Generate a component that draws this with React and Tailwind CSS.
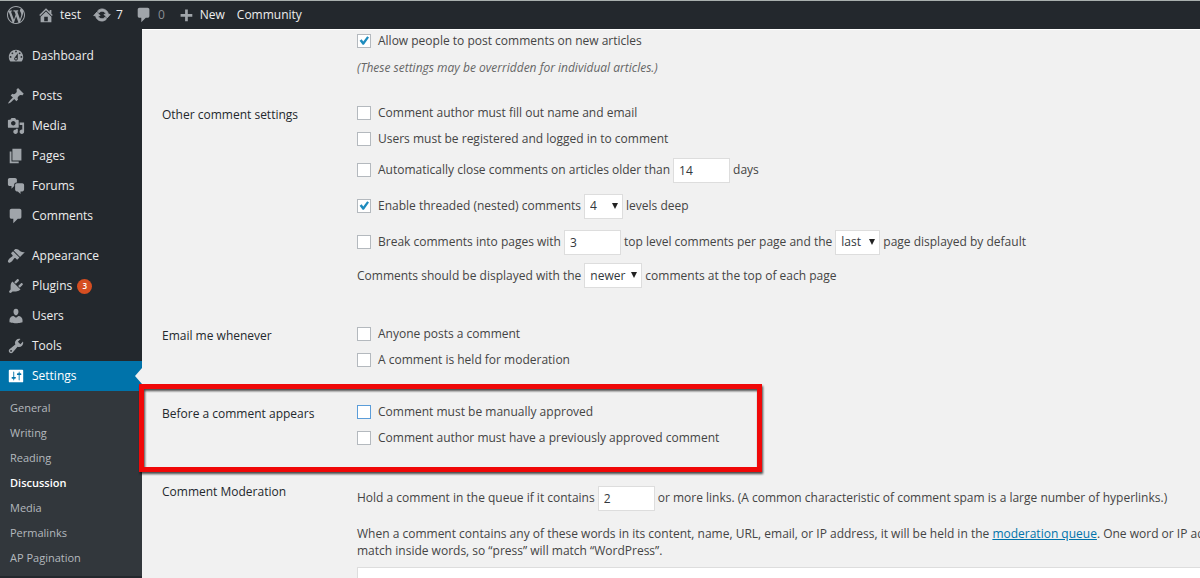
import clsx from 'clsx';

const paths = {
  wordpress: 'M20 10c0-5.51-4.49-10-10-10C4.48 0 0 4.49 0 10c0 5.52 4.48 10 10 10 5.51 0 10-4.48 10-10zM7.78 15.37L4.37 6.22c.55-.02 1.17-.08 1.17-.08.5-.06.44-1.13-.06-1.11 0 0-1.45.11-2.37.11-.18 0-.37 0-.58-.01C4.12 2.69 6.87 1.11 10 1.11c2.33 0 4.45.87 6.05 2.34-.68-.11-1.65.39-1.65 1.58 0 .74.45 1.36.9 2.1.35.61.55 1.36.55 2.46 0 1.49-1.4 5-1.4 5l-3.03-8.37c.54-.02.82-.17.82-.17.5-.05.44-1.25-.06-1.22 0 0-1.44.12-2.38.12-.87 0-2.33-.12-2.33-.12-.5-.03-.56 1.2-.06 1.22l.92.08 1.26 3.41zM17.41 10c.24-.64.74-1.87.43-4.25.7 1.29 1.05 2.71 1.05 4.25 0 3.29-1.73 6.24-4.4 7.78.97-2.59 1.94-5.2 2.92-7.78zM6.1 18.09C3.12 16.65 1.11 13.53 1.11 10c0-1.3.23-2.48.72-3.59C3.25 10.3 4.67 14.2 6.1 18.09zm4.03-6.63l2.58 6.98c-.86.29-1.76.45-2.71.45-.79 0-1.57-.11-2.29-.33.81-2.38 1.62-4.74 2.42-7.1z',
  home: 'M16 8.5l1.53 1.53-1.06 1.06L10 4.6l-6.47 6.49-1.06-1.06L10 2.5l4 4v-2h2v4zm-6-2.46l6 5.99V18H4v-5.97zM12 17v-5H8v5h4z',
  update: 'M10.2 3.28c3.53 0 6.43 2.61 6.92 6h2.08l-3.5 4-3.5-4h2.32c-.45-1.97-2.21-3.45-4.32-3.45-1.45 0-2.73.71-3.54 1.78L4.95 5.66C6.23 4.2 8.11 3.28 10.2 3.28zm-.4 13.44c-3.52 0-6.43-2.61-6.92-6H.8l3.5-4c1.17 1.33 2.33 2.67 3.5 4H5.48c.45 1.97 2.21 3.45 4.32 3.45 1.45 0 2.73-.71 3.54-1.78l1.71 1.95c-1.28 1.46-3.15 2.38-5.25 2.38z',
  comments: 'M5 2h9c1.1 0 2 .9 2 2v7c0 1.1-.9 2-2 2h-2l-5 5v-5H5c-1.1 0-2-.9-2-2V4c0-1.1.9-2 2-2z',
  plus: 'M17 9v3h-5v5H9v-5H4V9h5V4h3v5z',
  dashboard: 'M3.76 16h12.48c1.1-1.37 1.76-3.11 1.76-5 0-4.42-3.58-8-8-8s-8 3.58-8 8c0 1.89.66 3.63 1.76 5zM10 4c.55 0 1 .45 1 1s-.45 1-1 1-1-.45-1-1 .45-1 1-1zM6 6c.55 0 1 .45 1 1s-.45 1-1 1-1-.45-1-1 .45-1 1-1zm8 0c.55 0 1 .45 1 1s-.45 1-1 1-1-.45-1-1 .45-1 1-1zm-5.37 5.55L12 7v6c0 1.1-.9 2-2 2s-2-.9-2-2c0-.57.24-1.08.63-1.45zM4 10c.55 0 1 .45 1 1s-.45 1-1 1-1-.45-1-1 .45-1 1-1zm12 0c.55 0 1 .45 1 1s-.45 1-1 1-1-.45-1-1 .45-1 1-1zm-5 3c0-.55-.45-1-1-1s-1 .45-1 1 .45 1 1 1 1-.45 1-1z',
  post: 'M10.44 3.02l1.82-1.82 6.36 6.35-1.83 1.82c-1.05-.68-2.48-.57-3.41.36l-.75.75c-.92.93-1.04 2.35-.35 3.41l-1.83 1.82-2.41-2.41-2.8 2.79c-.42.42-3.38 2.71-3.8 2.29s1.86-3.39 2.28-3.81l2.79-2.79L4.1 9.36l1.83-1.82c1.05.69 2.48.57 3.4-.36l.75-.75c.93-.92 1.05-2.35.36-3.41z',
  media: 'M13 11V4c0-.55-.45-1-1-1h-1.67L9 1H5L3.67 3H2c-.55 0-1 .45-1 1v7c0 .55.45 1 1 1h10c.55 0 1-.45 1-1zM7 4.5c1.38 0 2.5 1.12 2.5 2.5S8.38 9.5 7 9.5 4.5 8.38 4.5 7 5.62 4.5 7 4.5zM14 6h5v10.5c0 1.38-1.12 2.5-2.5 2.5S14 17.88 14 16.5s1.12-2.5 2.5-2.5c.17 0 .34.02.5.05V9h-3V6zm-4 8.05V13h2v3.5c0 1.38-1.12 2.5-2.5 2.5S7 17.88 7 16.5 8.12 14 9.5 14c.17 0 .34.02.5.05z',
  page: 'M6 15V2h10v13H6zm-1 1h8v2H3V5h2v11z',
  forums: 'M11 6h-.82C9.07 6 8 7.2 8 8.16V10l-3 3v-3H3c-1.1 0-2-.9-2-2V3c0-1.1.9-2 2-2h6c1.1 0 2 .9 2 2v3zm0 1h6c1.1 0 2 .9 2 2v5c0 1.1-.9 2-2 2h-2v3l-3-3h-1c-1.1 0-2-.9-2-2V9c0-1.1.9-2 2-2z',
  appearance: 'M14.48 11.06L7.41 3.99l1.5-1.5c.5-.56 2.3-.47 3.51.32 1.21.8 1.43 1.28 2.91 2.1 1.18.64 2.45 1.26 4.45.85zm-.71.71L6.7 4.7 4.93 6.47c-.39.39-.39 1.02 0 1.41l1.06 1.06c.39.39.39 1.03 0 1.42-.6.6-1.43 1.11-2.21 1.69-.35.26-.7.53-1.01.84C1.43 14.23.4 16.08 1.4 17.07c.99 1 2.84-.03 4.18-1.36.31-.31.58-.66.85-1.02.57-.78 1.08-1.61 1.69-2.21.39-.39 1.02-.39 1.41 0l1.06 1.06c.39.39 1.02.39 1.41 0z',
  plugins: 'M13.11 4.36L9.87 7.6 8 5.73l3.24-3.24c.35-.34 1.05-.2 1.56.32.52.51.66 1.21.31 1.55zm-8 1.77l.91-1.12 9.01 9.01-1.19.84c-.71.71-2.63 1.16-3.82 1.16H6.14L4.9 17.26c-.59.59-1.54.59-2.12 0-.59-.58-.59-1.53 0-2.12l1.24-1.24v-3.88c0-1.13.4-3.19 1.09-3.89zm7.26 3.97l3.24-3.24c.34-.35 1.04-.21 1.55.31.52.51.66 1.21.31 1.55l-3.24 3.25z',
  users: 'M10 9.25c-2.27 0-2.73-3.44-2.73-3.44C7 4.02 7.82 2 9.97 2c2.16 0 2.98 2.02 2.71 3.81 0 0-.41 3.44-2.68 3.44zm0 2.57L12.72 10c2.39 0 4.52 2.33 4.52 4.53v2.49s-3.65 1.13-7.24 1.13c-3.65 0-7.24-1.13-7.24-1.13v-2.49c0-2.25 1.94-4.48 4.47-4.48z',
  tools: 'M16.68 9.77c-1.34 1.34-3.3 1.67-4.95.99l-5.41 6.52c-.99.99-2.59.99-3.58 0s-.99-2.59 0-3.57l6.52-5.42c-.68-1.65-.35-3.61.99-4.95 1.28-1.28 3.12-1.62 4.72-1.06l-2.89 2.89 2.82 2.82 2.86-2.87c.53 1.58.18 3.39-1.08 4.65zM3.81 16.21c.4.39 1.04.39 1.43 0 .4-.4.4-1.04 0-1.43-.39-.4-1.03-.4-1.43 0-.39.39-.39 1.03 0 1.43z',
  settings: 'M18 16V4c0-.55-.45-1-1-1H3c-.55 0-1 .45-1 1v12c0 .55.45 1 1 1h14c.55 0 1-.45 1-1zM8 11h1c.55 0 1 .45 1 1s-.45 1-1 1H8v1.5c0 .28-.22.5-.5.5s-.5-.22-.5-.5V13H6c-.55 0-1-.45-1-1s.45-1 1-1h1V5.5c0-.28.22-.5.5-.5s.5.22.5.5V11zm5-2h-1c-.55 0-1-.45-1-1s.45-1 1-1h1V5.5c0-.28.22-.5.5-.5s.5.22.5.5V7h1c.55 0 1 .45 1 1s-.45 1-1 1h-1v5.5c0 .28-.22.5-.5.5s-.5-.22-.5-.5V9z',
};

const menuGroups = [
  [{ icon: 'dashboard', label: 'Dashboard' }],
  [
    { icon: 'post', label: 'Posts' },
    { icon: 'media', label: 'Media' },
    { icon: 'page', label: 'Pages' },
    { icon: 'forums', label: 'Forums' },
    { icon: 'comments', label: 'Comments' },
  ],
  [
    { icon: 'appearance', label: 'Appearance' },
    { icon: 'plugins', label: 'Plugins', count: 3 },
    { icon: 'users', label: 'Users' },
    { icon: 'tools', label: 'Tools' },
    { icon: 'settings', label: 'Settings', current: true },
  ],
];

const submenu = ['General', 'Writing', 'Reading', 'Discussion', 'Media', 'Permalinks', 'AP Pagination'];

function Icon({ name, className }) {
  return (
    <svg viewBox="0 0 20 20" className={clsx('h-[18px] w-[18px] shrink-0 fill-current', className)} aria-hidden="true">
      <path fillRule="evenodd" d={paths[name]} />
    </svg>
  );
}

function AdminBar() {
  return (
    <header className="flex h-[29px] items-center gap-3 border-t border-[#a9b0ae] bg-[#23282d] px-[7px] text-[#eee]">
      <a href="#" aria-label="About WordPress"><Icon name="wordpress" className="text-[#a0a5aa]" /></a>
      <a href="#" className="flex items-center gap-[5px]"><Icon name="home" className="text-[#a0a5aa]" />test</a>
      <a href="#" className="flex items-center gap-[5px]"><Icon name="update" className="stroke-current stroke-1 text-[#a0a5aa]" />7</a>
      <a href="#" className="flex items-center gap-[5px] text-[#8a8f94]"><Icon name="comments" className="text-[#a0a5aa]" />0</a>
      <a href="#" className="flex items-center gap-[5px]"><Icon name="plus" className="text-[#a0a5aa]" />New</a>
      <a href="#">Community</a>
    </header>
  );
}

function Sidebar() {
  return (
    <nav className="w-[142px] shrink-0 bg-[#23282d] pt-3 text-[#eee]">
      <div className="flex flex-col gap-2.5">
        {menuGroups.map((group, i) => (
          <ul key={i}>
            {group.map(item => (
              <li key={item.label}>
                <a
                  href="#"
                  className={clsx('relative flex h-[30px] items-center gap-[5px] pl-[7px]', item.current && 'bg-[#0073aa] text-white')}
                >
                  <Icon name={item.icon} className={item.current ? 'text-white' : 'text-[#a0a5aa]'} />
                  <span className="pl-0.5">{item.label}</span>
                  {item.count && (
                    <span className="flex h-[15px] w-[15px] items-center justify-center rounded-full bg-[#d54e21] text-[8px] font-semibold text-white">
                      {item.count}
                    </span>
                  )}
                  {item.current && (
                    <span className="absolute top-[7px] right-0 border-y-8 border-r-[7px] border-y-transparent border-r-[#f1f1f1]" />
                  )}
                </a>
              </li>
            ))}
          </ul>
        ))}
      </div>
      <ul className="bg-[#32373c] pt-1 pb-1.5 pl-2.5 text-[#b4b9be]">
        {submenu.map(label => (
          <li key={label} className="h-[25px] text-[11px] leading-[25px]">
            <a href="#" className={clsx(label === 'Discussion' && 'font-semibold text-white')}>{label}</a>
          </li>
        ))}
      </ul>
    </nav>
  );
}

function Checkbox({ id, checked, focused }) {
  return (
    <span className="relative mr-[7px] h-3.5 w-3.5 shrink-0">
      <input
        id={id}
        type="checkbox"
        defaultChecked={checked}
        className={clsx(
          'peer block h-3.5 w-3.5 appearance-none border bg-white',
          focused ? 'border-[#5b9dd9]' : 'border-[#b4b9be]'
        )}
      />
      <svg viewBox="0 0 14 14" className="pointer-events-none absolute inset-0 hidden fill-[#1e8cbe] peer-checked:block">
        <path d="M2.6 6.8 4.6 5.2 6.3 7.6 10.2 2.2 12 3.5 6.9 10.8 5.6 10.8Z" />
      </svg>
    </span>
  );
}

function CheckRow({ id, label, checked, focused, tall, children }) {
  return (
    <div className={clsx('flex items-center', tall ? 'h-9' : 'h-[26px]')}>
      <Checkbox id={id} checked={checked} focused={focused} />
      <label htmlFor={id}>{label}</label>
      {children}
    </div>
  );
}

function NumberBox({ label, value }) {
  return (
    <input
      type="text"
      aria-label={label}
      defaultValue={value}
      className="mx-[3px] h-[25px] w-[57px] border border-[#ddd] bg-white px-[5px] text-[#32373c]"
    />
  );
}

function Select({ label, options, className }) {
  return (
    <span className="relative mx-[3px]">
      <select
        aria-label={label}
        className={clsx('block h-[25px] appearance-none border border-[#ddd] bg-white pl-[5px] text-[#32373c]', className)}
      >
        {options.map(o => <option key={o}>{o}</option>)}
      </select>
      <svg viewBox="0 0 6 6" className="pointer-events-none absolute top-[9px] right-[5px] h-1.5 w-1.5 fill-[#222]">
        <path d="M0 0H6L3 6Z" />
      </svg>
    </span>
  );
}

function Section({ title, children }) {
  return (
    <section className="relative mb-[26px] grid grid-cols-[195px_1fr]">
      <h2 className="pt-1.5 leading-[17px] font-medium text-[#23282d]">{title}</h2>
      <div>{children}</div>
    </section>
  );
}

export default function App() {
  return (
    <div className="h-screen overflow-hidden bg-[#f1f1f1] font-['Open_Sans','Noto_Sans',sans-serif] text-[12px] text-[#444]">
      <AdminBar />
      <div className="flex">
        <Sidebar />
        <main className="min-w-0 flex-1 border-t border-white pl-5">
          <div className="mb-6 pl-[195px]">
            <div className="flex h-[22px] items-center">
              <Checkbox id="allow" checked />
              <label htmlFor="allow">Allow people to post comments on new articles</label>
            </div>
            <p className="mt-[7px] leading-[17px] text-[#666] italic">(These settings may be overridden for individual articles.)</p>
          </div>

          <Section title="Other comment settings">
            <CheckRow id="name-email" label="Comment author must fill out name and email" />
            <CheckRow id="registered" label="Users must be registered and logged in to comment" />
            <CheckRow id="close" label="Automatically close comments on articles older than" tall>
              <NumberBox label="Days" value="14" />
              <span>days</span>
            </CheckRow>
            <CheckRow id="threaded" label="Enable threaded (nested) comments" checked tall>
              <Select label="Levels" options={['4']} className="w-[39px]" />
              <span>levels deep</span>
            </CheckRow>
            <CheckRow id="paged" label="Break comments into pages with" tall>
              <NumberBox label="Comments per page" value="3" />
              <span>top level comments per page and the</span>
              <Select label="Default page" options={['last', 'first']} className="w-[45px]" />
              <span>page displayed by default</span>
            </CheckRow>
            <div className="flex h-[35px] items-center pb-1">
              <span>Comments should be displayed with the</span>
              <Select label="Comment order" options={['newer', 'older']} className="w-[58px]" />
              <span>comments at the top of each page</span>
            </div>
          </Section>

          <Section title="Email me whenever">
            <CheckRow id="anyone" label="Anyone posts a comment" />
            <CheckRow id="held" label="A comment is held for moderation" />
          </Section>

          <Section title="Before a comment appears">
            <CheckRow id="manual" label="Comment must be manually approved" focused />
            <CheckRow id="previous" label="Comment author must have a previously approved comment" />
            {/* red highlight around the approval options */}
            <div className="pointer-events-none absolute -top-[15px] -left-[23px] h-[88px] w-[623px] border-[5px] border-[#f00808] drop-shadow-[1px_2px_1px_rgba(0,0,0,0.7)]" />
          </Section>

          <Section title="Comment Moderation">
            <div className="flex h-[42px] items-center">
              <span>Hold a comment in the queue if it contains</span>
              <NumberBox label="Links" value="2" />
              <span>or more links. (A common characteristic of comment spam is a large number of hyperlinks.)</span>
            </div>
            <label htmlFor="moderation-keys" className="mt-1.5 block leading-[17px] whitespace-nowrap">
              When a comment contains any of these words in its content, name, URL, email, or IP address, it will be held in the{' '}
              <a href="#" className="text-[#0073aa] underline">moderation queue</a>. One word or IP address per line. It will
              <br />
              match inside words, so “press” will match “WordPress”.
            </label>
            <textarea id="moderation-keys" rows={10} className="mt-2 block w-full border border-[#ddd] bg-white p-1.5" />
          </Section>
        </main>
      </div>
    </div>
  );
}
